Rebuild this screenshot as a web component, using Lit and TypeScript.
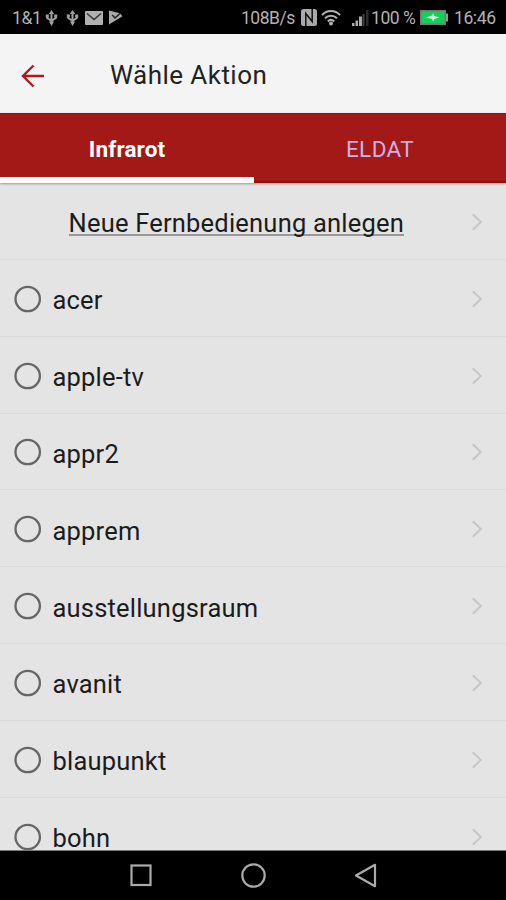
import { LitElement, html, css } from "lit";
import { customElement } from "lit/decorators.js";

const usb = html`<svg width="13" height="18" viewBox="0 0 13 18">
  <path d="M6.500 3v12M2.200 7.500v1.500L6.500 11.800 10.800 9V7.500" fill="none" stroke="#a0a0a0" stroke-width="2"/>
  <path d="M6.500 1 9.200 5H3.800zM0.800 5.500h3v3h-3zM9.200 5.500h3v3h-3zM4 12.500h5L6.500 17z" fill="#a0a0a0"/>
</svg>`;

const chevron = html`<svg class="chev" width="12" height="18" viewBox="0 0 12 18">
  <path d="M1.800 1.200 9.800 9 1.800 16.800" fill="none" stroke="#c6c6c6" stroke-width="2"/>
</svg>`;

@customElement("status-bar")
class StatusBar extends LitElement {
  static styles = css`
    :host { display: flex; align-items: center; height: 34px; background: #000; color: #b2b2b2;
      font: 17.500px/34px Roboto, sans-serif; padding: 0 10px 0 12px; box-sizing: border-box; white-space: pre; }
    svg { flex: none; position: relative; top: 0.500px; }
    span { position: relative; top: 1px; flex: none; }
    .carrier { width: 33px; letter-spacing: -0.400px; }
    .u2 { margin-left: 8px; display: flex; }
    .u1 { display: flex; }
    .mail { margin-left: 6px; }
    .play { margin-left: 6px; }
    .rate { margin-left: auto; width: 57px; letter-spacing: -0.500px; }
    .nfc { margin-left: 3px; }
    .wifi { margin-left: 4px; }
    .signal { margin-left: 11px; }
    .pct { margin-left: 2px; width: 46px; letter-spacing: -0.450px; }
    .bat { margin-left: 3px; }
    .time { margin-left: 6px; width: 42px; letter-spacing: -0.400px; }
  `;
  render() {
    return html`
      <span class="carrier">1&amp;1</span>
      <div class="u1">${usb}</div><div class="u2">${usb}</div>
      <svg class="mail" width="18" height="14" viewBox="0 0 18 14"><rect width="18" height="14" rx="1" fill="#b0b0b0"/><path d="M2 2.500 9 8.500 16 2.500" fill="none" stroke="#333" stroke-width="1.500"/></svg>
      <svg class="play" width="14" height="15" viewBox="0 0 14 15"><path d="M0 0.500 11 3.200 13.500 6.300 0 14.500z" fill="#a8a8a8"/><path d="M3.200 5 6 8 11.500 3" fill="none" stroke="#222" stroke-width="1.500"/></svg>
      <span class="rate">108B/s</span>
      <svg class="nfc" width="16" height="17" viewBox="0 0 16 17"><rect width="16" height="17" rx="2.500" fill="#aaa"/><path d="M4.800 17V4.500L11.200 12.500V0" fill="none" stroke="#111" stroke-width="1.500"/></svg>
      <svg class="wifi" width="20" height="16" viewBox="0 0 20 16"><g fill="none" stroke="#b0b0b0" stroke-width="2"><path d="M1 5C6-.3 14-.3 19 5M4 8.300C7.500 4.800 12.500 4.800 16 8.300M6.800 11.500C8.700 9.600 11.300 9.600 13.200 11.500"/></g><circle cx="10" cy="13.500" r="2" fill="#b0b0b0"/></svg>
      <svg class="signal" width="17" height="16" viewBox="0 0 17 16"><g fill="#aaa"><rect y="13" width="2.500" height="3"/><rect x="3.500" y="10.500" width="2.500" height="5.500"/><rect x="7" y="6.500" width="3" height="9.500"/></g><rect x="10.500" y="4" width="2" height="12" fill="#444"/><rect x="14" width="2.500" height="16" fill="#2c2c2c"/></svg>
      <span class="pct">100 %</span>
      <svg class="bat" width="28" height="15" viewBox="0 0 28 15"><rect x=".75" y=".75" width="24.500" height="13.500" fill="#12d05a" stroke="#777" stroke-width="1.500"/><rect x="26" y="3.500" width="2" height="8" fill="#999"/><path d="M6 7.500 12 5.500 13 3.500 14.500 6 19.500 7.500 14.500 9 13 11.500 12 9z" fill="#d5f8df"/></svg>
      <span class="time">16:46</span>`;
  }
}

@customElement("remote-row")
class RemoteRow extends LitElement {
  static properties = { label: {}, link: { type: Boolean } };
  declare label: string;
  declare link: boolean;
  static styles = css`
    :host { display: flex; align-items: center; flex: none; height: 76.850px; box-sizing: border-box;
      border-bottom: 1px solid #dbdbdb; padding: 2px 23px 0 14px; font: 25.500px/24px Roboto, sans-serif; color: #1c1c1c; }
    svg { flex: none; }
    .radio { margin-right: 10.500px; }
    .name { padding-top: 3px; letter-spacing: 0.200px; white-space: nowrap; }
    .new { margin-left: 54.500px; padding-top: 3px; }
    .new u { display: block; text-decoration: none; height: 22.500px; border-bottom: 2px solid #999; letter-spacing: 0.210px; white-space: nowrap; }
    .chev { margin-left: auto; }
  `;
  render() {
    return html`${this.link
      ? html`<div class="new"><u>${this.label}</u></div>`
      : html`<svg class="radio" width="28" height="28" viewBox="0 0 28 28"><circle cx="13.700" cy="14" r="12.200" fill="none" stroke="#666" stroke-width="2.300"/></svg><span class="name">${this.label}</span>`}${chevron}`;
  }
}

@customElement("app-root")
class AppRoot extends LitElement {
  static styles = css`
    :host { display: flex; flex-direction: column; width: 506px; height: 900px; overflow: hidden;
      background: #e4e4e4; font-family: Roboto, sans-serif; }
    status-bar, header, .tabs, nav { flex: none; }
    header { display: flex; align-items: center; height: 79px; background: #f4f4f4; padding-left: 21px; box-sizing: border-box; }
    h1 { margin: 3px 0 0 65px; font: 26px/30px Roboto, sans-serif; color: #222; letter-spacing: 0.450px; }
    .arrow { margin-top: 4px; }
    .tabs { display: flex; height: 70px; background: #a31918; box-shadow: 0 1px 2px #999; position: relative; box-sizing: border-box; border-top: 1px solid #98100f; }
    .tab { flex: 1; display: flex; align-items: center; justify-content: center; font-size: 22.500px; color: #cfb0e0; padding-top: 2px; border-bottom: 2px solid #980d0d; letter-spacing: 0.400px; }
    .tab.on { color: #fff; font-weight: 700; border-bottom: 6px solid #fff; padding-top: 6px; letter-spacing: 0.150px; flex: none; width: 254px; }
    .list { flex: 1; min-height: 0; overflow: hidden; display: flex; flex-direction: column; }
    nav { display: flex; height: 50px; background: #000; border-top: 1px solid #777; box-sizing: border-box; align-items: center; justify-content: center; gap: 88px; }
  `;
  render() {
    const remotes = ["acer", "apple-tv", "appr2", "apprem", "ausstellungsraum", "avanit", "blaupunkt", "bohn"];
    return html`
      <status-bar></status-bar>
      <header>
        <svg class="arrow" width="24" height="24" viewBox="0 0 24 24"><path d="M23 12H2M12.500 1.500 2 12 12.500 22.500" fill="none" stroke="#ab1a1c" stroke-width="2.400"/></svg>
        <h1>Wähle Aktion</h1>
      </header>
      <div class="tabs"><div class="tab on">Infrarot</div><div class="tab">ELDAT</div></div>
      <div class="list">
        <remote-row link label="Neue Fernbedienung anlegen"></remote-row>
        ${remotes.map((r) => html`<remote-row .label=${r}></remote-row>`)}
      </div>
      <nav>
        <svg width="24" height="26" viewBox="0 0 24 26"><rect x="3.500" y="2.500" width="19" height="19.500" fill="none" stroke="#aaa" stroke-width="2.200"/></svg>
        <svg width="26" height="26" viewBox="0 0 26 26"><circle cx="13.500" cy="12.500" r="11.200" fill="none" stroke="#aaa" stroke-width="2.200"/></svg>
        <svg width="24" height="26" viewBox="0 0 24 26"><path d="M21 1.800V23.200L2 12.500z" fill="none" stroke="#aaa" stroke-width="2.200" stroke-linejoin="round"/></svg>
      </nav>`;
  }
}
